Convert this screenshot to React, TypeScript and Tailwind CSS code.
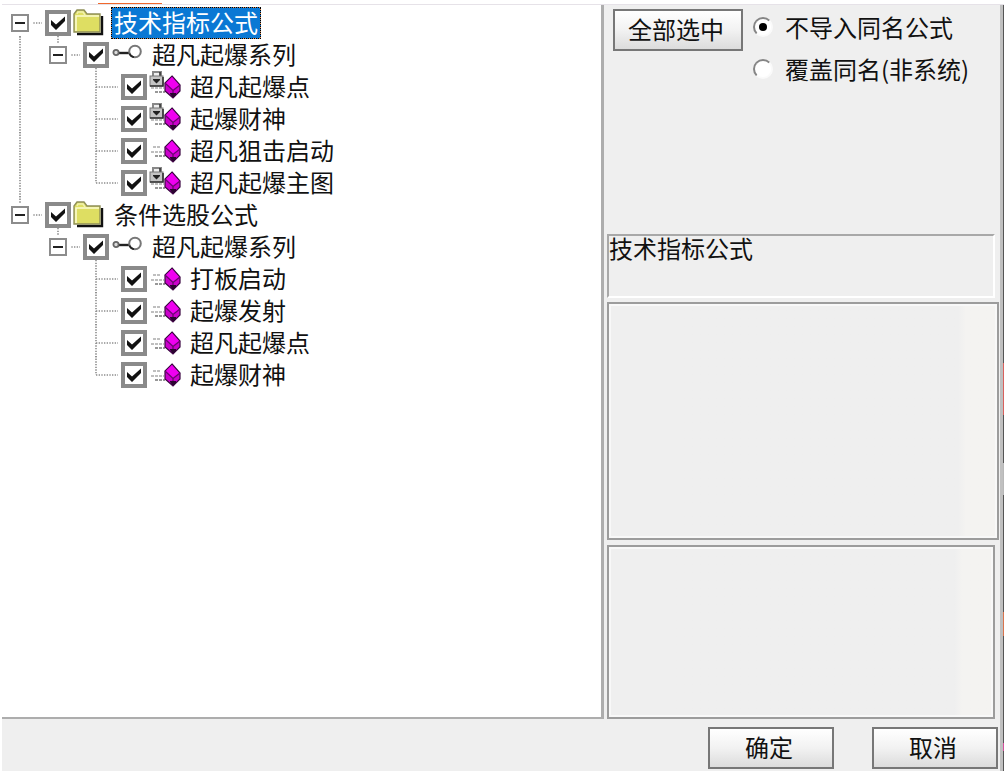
import { useState } from "react";

type Kind = "folder" | "link" | "locked" | "formula";

type Row = {
  id: string;
  label: string;
  kind: Kind;
  // one entry per indent column: a guide passes through, stops here, or is empty
  guides: ("through" | "branch" | "end" | "start" | "none")[];
};

const rows: Row[] = [
  { id: "ind", label: "技术指标公式", kind: "folder", guides: ["start"] },
  { id: "ind-s", label: "超凡起爆系列", kind: "link", guides: ["through", "end"] },
  { id: "ind-1", label: "超凡起爆点", kind: "locked", guides: ["through", "none", "branch"] },
  { id: "ind-2", label: "起爆财神", kind: "locked", guides: ["through", "none", "branch"] },
  { id: "ind-3", label: "超凡狙击启动", kind: "formula", guides: ["through", "none", "branch"] },
  { id: "ind-4", label: "超凡起爆主图", kind: "locked", guides: ["through", "none", "end"] },
  { id: "sel", label: "条件选股公式", kind: "folder", guides: ["end"] },
  { id: "sel-s", label: "超凡起爆系列", kind: "link", guides: ["none", "end"] },
  { id: "sel-1", label: "打板启动", kind: "formula", guides: ["none", "none", "branch"] },
  { id: "sel-2", label: "起爆发射", kind: "formula", guides: ["none", "none", "branch"] },
  { id: "sel-3", label: "超凡起爆点", kind: "formula", guides: ["none", "none", "branch"] },
  { id: "sel-4", label: "起爆财神", kind: "formula", guides: ["none", "none", "end"] },
];

function Guide({ type }: { type: Row["guides"][number] }) {
  const dots = { stroke: "#8c8c8c", strokeWidth: 1.6, strokeDasharray: "1.33 1.34" };
  return (
    <svg width="38" height="32" className="overflow-visible" aria-hidden="true">
      {(type === "through" || type === "branch") && <path d="M18 -3V32" {...dots} />}
      {type === "end" && <path d="M18 -3V16" {...dots} />}
      {type === "start" && <path d="M18 16V32" {...dots} />}
      {type !== "through" && type !== "none" && <path d="M18 16H40" {...dots} />}
    </svg>
  );
}

function FolderIcon() {
  return (
    <svg width="32" height="28" viewBox="0 0 32 28">
      <path d="M4 25H29V7" fill="none" stroke="#111" strokeWidth="2.4" />
      <path d="M1 23V5L4 1H11L14 5H27V23Z" fill="#dede62" stroke="#8f8f58" strokeWidth="1.4" />
      <path d="M3 22V7H26" fill="none" stroke="#fbfbd0" strokeWidth="1.6" />
      <path d="M4 5L5 3H10L12 6" fill="none" stroke="#f1f1b0" strokeWidth="1.4" />
    </svg>
  );
}

function LinkIcon() {
  return (
    <svg width="32" height="28" viewBox="0 0 32 28" fill="none">
      <path d="M7 12H18" stroke="#222" strokeWidth="2.4" />
      <circle cx="5" cy="11.500" r="2.600" fill="#ddd" stroke="#666" strokeWidth="1.8" />
      <circle cx="24" cy="10.500" r="5.800" fill="#fff" stroke="#777" strokeWidth="2" />
      <path d="M18.500 12.500A5.800 5.800 0 0 0 23 16.300" stroke="#222" strokeWidth="1.6" />
    </svg>
  );
}

function FormulaIcon({ locked }: { locked: boolean }) {
  return (
    <svg width="34" height="32" viewBox="0 0 34 32">
      <g stroke="#aaa" strokeWidth="1.4" strokeDasharray="3 1">
        <path d="M4 12H12" />
        <path d="M2 17H15" />
        <path d="M6 21H16" stroke="#777" />
      </g>
      {locked && (
        <g>
          <path d="M4 6V1H12V6" fill="#eee" stroke="#888" strokeWidth="2" />
          <path d="M11 1V5" stroke="#333" strokeWidth="1.6" />
          <rect x="1" y="5" width="13" height="10" fill="#c4c4c4" stroke="#777" />
          <path d="M1 15H14V6" fill="none" stroke="#333" strokeWidth="1.6" />
          <path d="M4 8H11V9L7.500 12.500L4 9Z" fill="#222" />
        </g>
      )}
      <path d="M23 5L31 14V20L24 27L16 20V12Z" fill="#cc00cc" stroke="#3a0640" strokeWidth="1.2" />
      <path d="M23 6L30 14L24 19L16.500 12.500Z" fill="#f000f0" />
      <path d="M16 12L24 19.500L31 14M24 19.500V27" fill="none" stroke="#6a0670" strokeWidth="1.3" />
      <path d="M21 23L24 27L27 24V22H21Z" fill="#2b0530" />
    </svg>
  );
}

function TreeRow({ row, selected, onSelect }: { row: Row; selected: boolean; onSelect: () => void }) {
  const hasChildren = row.kind === "folder" || row.kind === "link";
  return (
    <li className="flex h-8 items-center">
      {row.guides.map((type, i) => (
        <span key={i} className="relative block h-8 w-[38px] shrink-0">
          <Guide type={type} />
          {hasChildren && i === row.guides.length - 1 && (
            <button
              type="button"
              aria-label="收起"
              className="absolute inset-y-0 left-[9px] my-auto flex size-[18px] items-center justify-center border-2 border-[#8c8c8c] bg-white ring-3 ring-white"
            >
              <span className="h-0.5 w-2.5 bg-[#222]" />
            </button>
          )}
        </span>
      ))}
      <span className="relative z-10 ml-[5px] grid size-[26px] shrink-0">
        <input
          id={row.id}
          type="checkbox"
          defaultChecked
          className="peer col-start-1 row-start-1 size-[26px] appearance-none border-4 border-[#8a8a8a] bg-white"
        />
        <svg
          viewBox="0 0 26 26"
          className="pointer-events-none invisible col-start-1 row-start-1 size-[26px] peer-checked:visible"
        >
          <path d="M6 10L11 14.500L20 6.500V11L11 20L6 15Z" fill="#111" />
        </svg>
      </span>
      <span className="flex w-10 shrink-0 pl-0.5">
        {row.kind === "folder" && <FolderIcon />}
        {row.kind === "link" && <LinkIcon />}
        {row.kind === "locked" && <FormulaIcon locked />}
        {row.kind === "formula" && <FormulaIcon locked={false} />}
      </span>
      <label
        htmlFor={row.id}
        onClick={onSelect}
        className={
          selected
            ? "border border-dashed border-[#e0915a] bg-[#0a78d4] px-0.5 pb-0.5 leading-7 whitespace-nowrap text-white outline-1 -outline-offset-1 outline-dotted outline-black"
            : "border border-transparent px-0.5 pb-0.5 leading-7 whitespace-nowrap"
        }
      >
        {row.label}
      </label>
    </li>
  );
}

const buttonClass =
  "h-[42px] border-2 border-[#777] bg-linear-to-b from-white via-[#f2f2f2] to-[#dcdcdc] pr-1 pb-0.5 leading-none";

const paneClass =
  "resize-none border-2 border-[#9c9c9c] bg-linear-to-r from-[#efefef] from-90% to-[#f4f3f1] to-92% inset-ring-2 inset-ring-[#f8f8f8] outline-none";

export default function App() {
  const [selected, setSelected] = useState("ind");
  const [mode, setMode] = useState("skip");

  return (
    <div className="flex min-h-screen flex-col bg-white pl-0.5 font-['Noto_Sans_CJK_SC',sans-serif] text-2xl text-[#111]">
      <div className="flex h-[5px] items-end border-b border-[#e6e2e8]">
        <div className="ml-24 h-px w-16 bg-[#f0682c]" />
      </div>
      <div className="flex grow">
        <div className="flex grow flex-col bg-[#efefef]">
          <main className="flex grow">
            <ul className="grow border-r-3 border-b-2 border-[#adadad] bg-white pt-0.5">
              {rows.map((row) => (
                <TreeRow key={row.id} row={row} selected={row.id === selected} onSelect={() => setSelected(row.id)} />
              ))}
            </ul>

            <section className="flex w-[396px] shrink-0 flex-col pl-[3px]">
              <div className="flex h-[229px] items-start pt-1 pl-1.5">
                <button type="button" className={`${buttonClass} w-[130px]`}>
                  全部选中
                </button>
                <div className="ml-2.5 flex flex-col gap-2.5">
                  {[
                    { value: "skip", label: "不导入同名公式" },
                    { value: "cover", label: "覆盖同名(非系统)" },
                  ].map((option) => (
                    <label key={option.value} className="flex h-8 items-center gap-3 pt-1 leading-8 whitespace-nowrap">
                      <input
                        type="radio"
                        name="mode"
                        checked={mode === option.value}
                        onChange={() => setMode(option.value)}
                        className="grid size-5 appearance-none place-items-center rounded-full border-2 border-[#fafafa] border-t-[#858585] border-l-[#858585] bg-white before:size-2 before:rounded-full checked:before:bg-black"
                      />
                      {option.label}
                    </label>
                  ))}
                </div>
              </div>
              <div className="mr-[5px] h-16 border-2 border-[#a8a8a8] border-r-white border-b-white leading-6">
                技术指标公式
              </div>
              <textarea readOnly aria-label="公式说明" className={`${paneClass} mt-1 mr-px h-[238px]`} />
              <textarea readOnly aria-label="公式参数" className={`${paneClass} mt-[5px] mr-[5px] grow`} />
            </section>
          </main>

          <footer className="flex justify-end gap-[38px] pt-2 pr-0.5 pb-0.5">
            <button type="button" className={`${buttonClass} w-[126px]`}>
              确定
            </button>
            <button type="button" className={`${buttonClass} w-[126px]`}>
              取消
            </button>
          </footer>
        </div>
        <div className="flex w-1 shrink-0 flex-col border-l-3 border-[#c0c0c0] bg-[#555]">
          <div className="mt-[358px] h-[52px] bg-[#d9605c]" />
          <div className="mt-12 h-8 bg-[#b8b8b8]" />
          <div className="mt-[117px] h-6 bg-[#d9734c]" />
          <div className="mt-[107px] h-2 bg-[#d44f9c]" />
        </div>
      </div>
    </div>
  );
}
